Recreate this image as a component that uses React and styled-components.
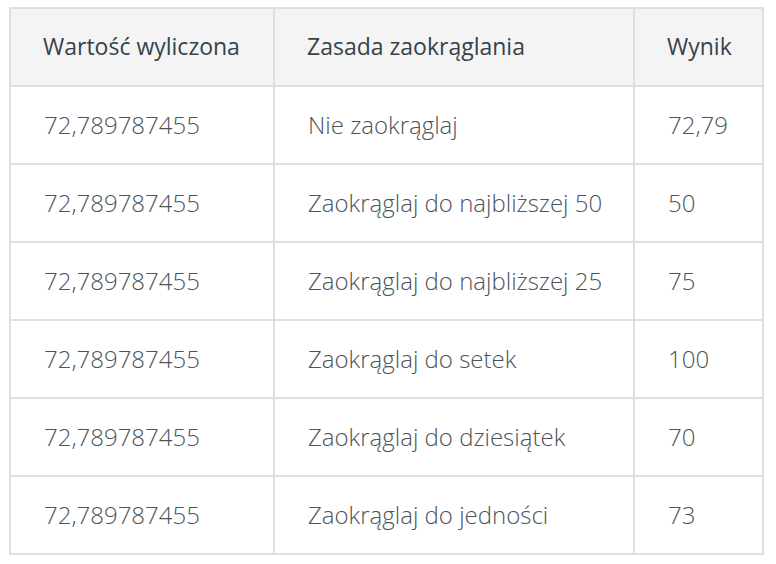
import React from "react";
import styled, { createGlobalStyle } from "styled-components";

const Global = createGlobalStyle`
  html, body { margin: 0; padding: 0; background: #ffffff; }
  body { padding: 7px 0 0 9px; font-family: "Open Sans", "Noto Sans", sans-serif; }
`;

const Table = styled.table`
  border-collapse: separate;
  border-spacing: 0;
  table-layout: fixed;
  width: 755px;
  border-top: 2px solid #dfdfdf;
  border-left: 2px solid #dfdfdf;
`;

const Cell = styled.td`
  box-sizing: border-box;
  height: 78px;
  padding: 0 0 0 33px;
  border-right: 2px solid #dfdfdf;
  border-bottom: 2px solid #dfdfdf;
  font-size: 24px;
  font-weight: 300;
  color: #4d5459;
  white-space: nowrap;
  vertical-align: middle;
  line-height: 1.2;
`;

const HeadCell = styled(Cell).attrs({ as: "th" })`
  background: #f4f4f4;
  font-size: 23px;
  font-weight: 400;
  color: #35434b;
  text-align: left;
  padding-left: 32px;
`;

const rows = [
  ["72,789787455", "Nie zaokrąglaj", "72,79"],
  ["72,789787455", "Zaokrąglaj do najbliższej 50", "50"],
  ["72,789787455", "Zaokrąglaj do najbliższej 25", "75"],
  ["72,789787455", "Zaokrąglaj do setek", "100"],
  ["72,789787455", "Zaokrąglaj do dziesiątek", "70"],
  ["72,789787455", "Zaokrąglaj do jedności", "73"],
];

export default function App() {
  return (
    <>
      <Global />
      <Table>
        <colgroup>
          <col style={{ width: 264 }} />
          <col style={{ width: 360 }} />
          <col style={{ width: 129 }} />
        </colgroup>
        <thead>
          <tr>
            <HeadCell>Wartość wyliczona</HeadCell>
            <HeadCell>Zasada zaokrąglania</HeadCell>
            <HeadCell>Wynik</HeadCell>
          </tr>
        </thead>
        <tbody>
          {rows.map((r, i) => (
            <tr key={i}>
              <Cell>{r[0]}</Cell>
              <Cell>{r[1]}</Cell>
              <Cell>{r[2]}</Cell>
            </tr>
          ))}
        </tbody>
      </Table>
    </>
  );
}
